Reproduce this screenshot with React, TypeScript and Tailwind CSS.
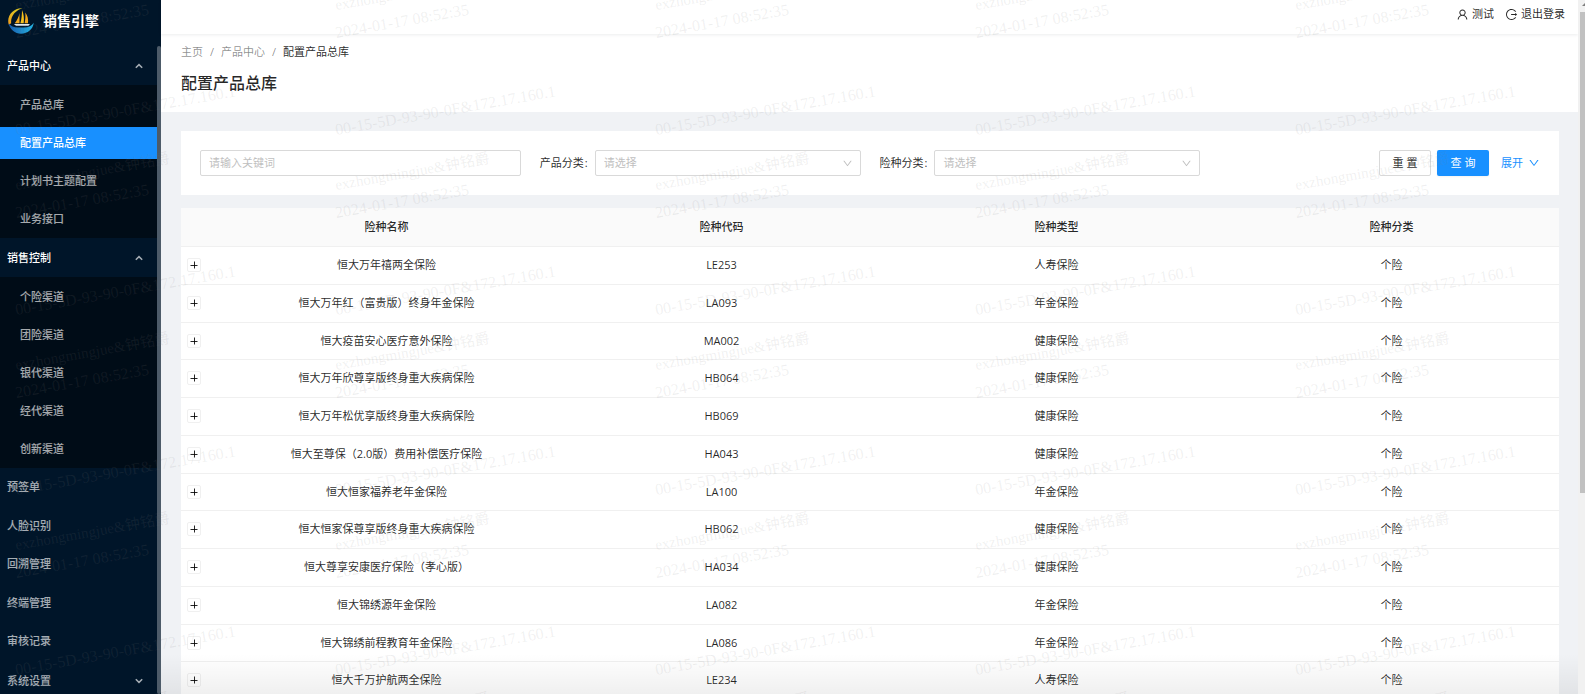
import { useState } from 'react';
import { AiOutlineDown, AiOutlineLogout, AiOutlineUser } from 'react-icons/ai';

interface MenuNode {
  label: string;
  children?: string[];
}

interface Product {
  name: string;
  code: string;
  type: string;
  category: string;
}

const MENU: MenuNode[] = [
  { label: '产品中心', children: ['产品总库', '配置产品总库', '计划书主题配置', '业务接口'] },
  { label: '销售控制', children: ['个险渠道', '团险渠道', '银代渠道', '经代渠道', '创新渠道'] },
  { label: '预签单' },
  { label: '人脸识别' },
  { label: '回溯管理' },
  { label: '终端管理' },
  { label: '审核记录' },
  { label: '系统设置', children: [] },
];

const PRODUCTS: Product[] = [
  { name: '恒大万年禧两全保险', code: 'LE253', type: '人寿保险', category: '个险' },
  { name: '恒大万年红（富贵版）终身年金保险', code: 'LA093', type: '年金保险', category: '个险' },
  { name: '恒大疫苗安心医疗意外保险', code: 'MA002', type: '健康保险', category: '个险' },
  { name: '恒大万年欣尊享版终身重大疾病保险', code: 'HB064', type: '健康保险', category: '个险' },
  { name: '恒大万年松优享版终身重大疾病保险', code: 'HB069', type: '健康保险', category: '个险' },
  { name: '恒大至尊保（2.0版）费用补偿医疗保险', code: 'HA043', type: '健康保险', category: '个险' },
  { name: '恒大恒家福养老年金保险', code: 'LA100', type: '年金保险', category: '个险' },
  { name: '恒大恒家保尊享版终身重大疾病保险', code: 'HB062', type: '健康保险', category: '个险' },
  { name: '恒大尊享安康医疗保险（孝心版）', code: 'HA034', type: '健康保险', category: '个险' },
  { name: '恒大锦绣源年金保险', code: 'LA082', type: '年金保险', category: '个险' },
  { name: '恒大锦绣前程教育年金保险', code: 'LA086', type: '年金保险', category: '个险' },
  { name: '恒大千万护航两全保险', code: 'LE234', type: '人寿保险', category: '个险' },
];

function Logo() {
  return (
    <svg className="h-[26px] w-[26px]" viewBox="0 0 26 26" aria-hidden="true">
      <defs>
        <linearGradient id="logo-gold" x1="0" y1="0" x2="0" y2="1">
          <stop offset="0" stopColor="#d9c622" />
          <stop offset="1" stopColor="#f39a1c" />
        </linearGradient>
        <linearGradient id="logo-sea" x1="0" y1="0" x2="1" y2="0">
          <stop offset="0" stopColor="#1a5cab" />
          <stop offset="1" stopColor="#22b5e6" />
        </linearGradient>
      </defs>
      <path d="M14.500.3C7-.3.200 5.500.200 13c0 1.300.2 2.600.6 3.700l2.400-1.500C2.300 8.500 7.500 2.300 14.500.3Z" fill="url(#logo-gold)" />
      <path d="M.6 15.200C2.500 18 6 19.600 10 19.600h6c4.500 0 8-1.600 9.700-4.800C25 21.200 19.800 25.700 13 25.700 7 25.700 1.800 21.500.6 15.200Z" fill="url(#logo-sea)" />
      <path d="M11.500 5v10.300H6.800C9 12.500 10.800 9 11.500 5Z" fill="#f2a81d" />
      <path d="M14 2c1.800 4 2.300 8.500 1.700 13.300h-3.300c1.200-4.300 1.600-8.800 1.600-13.300Z" fill="#f6c21c" />
      <path d="M17.300 4.500c2.400 3 3.200 7 2.700 10.800h-3.400c.8-3.600 1-7.200.7-10.800Z" fill="#f2a81d" />
      <path d="M5.800 16h16.200l-1.600 1.800H8L5.800 16Z" fill="#dfe7ee" />
    </svg>
  );
}

function Arrow({ up }: { up: boolean }) {
  return (
    <svg className="h-2 w-2" viewBox="0 0 8 8" fill="none" stroke="currentColor" strokeWidth="1.5" aria-hidden="true">
      <path d={up ? 'M.8 5.800 4 2.600l3.200 3.200' : 'M.8 2.200 4 5.400l3.200-3.200'} />
    </svg>
  );
}

function Sidebar() {
  const [active, setActive] = useState('配置产品总库');

  return (
    <aside className="flex w-[161px] flex-shrink-0 flex-col bg-[#001529]">
      <a href="#" className="flex h-[46px] flex-shrink-0 items-start gap-[9px] px-2 pt-2">
        <Logo />
        <span className="text-[14px] leading-[26px] font-bold text-white">销售引擎</span>
      </a>
      <div className="flex min-h-0 flex-1">
        <nav className="flex-1 overflow-hidden text-white/65">
          {MENU.map(node => (
            <div key={node.label} className="nth-[2n+4]:pt-px">
              {node.children ? (
                <button
                  className={`flex h-[39px] w-full items-center justify-between pr-[14px] pl-[7px] text-left font-medium ${node.children.length ? 'text-white' : ''}`}
                >
                  {node.label}
                  <span className="text-white/65"><Arrow up={node.children.length > 0} /></span>
                </button>
              ) : (
                <a href="#" className="flex h-[38px] items-center pl-[7px] font-medium">{node.label}</a>
              )}
              {node.children && node.children.length > 0 && (
                <div className="bg-[#000c17] pt-px">
                  {node.children.map(c => (
                    <div key={c} className="py-[3px]">
                      <a
                        href="#"
                        onClick={() => setActive(c)}
                        className={`flex h-8 items-center pl-5 font-medium ${c === active ? 'bg-[#1890ff] text-white' : ''}`}
                      >
                        {c}
                      </a>
                    </div>
                  ))}
                </div>
              )}
            </div>
          ))}
        </nav>
        <div className="w-1 rounded-full bg-[#4d5b69]" />
      </div>
    </aside>
  );
}

function SelectField({ id, label }: { id: string; label: string }) {
  return (
    <div className="flex items-center gap-[7px]">
      <label htmlFor={id} className="flex-shrink-0">
        {label}<span className="pl-px">:</span>
      </label>
      <div className="relative flex-1">
        <select
          id={id}
          defaultValue=""
          className="block h-[26px] w-full appearance-none rounded-xs border border-[#d9d9d9] bg-white px-2 text-[#bfbfbf] outline-none"
        >
          <option value="">请选择</option>
        </select>
        <AiOutlineDown className="pointer-events-none absolute top-2 right-2 h-[11px] w-[11px] text-[#bfbfbf]" />
      </div>
    </div>
  );
}

function FilterBar() {
  return (
    <form className="grid grid-cols-4 items-center gap-[19px] bg-white p-[19px]" onSubmit={e => e.preventDefault()}>
      <input
        type="text"
        aria-label="关键词"
        placeholder="请输入关键词"
        className="h-[26px] w-full rounded-xs border border-[#d9d9d9] bg-white px-2 pb-px outline-none placeholder:text-[#bfbfbf]"
      />
      <SelectField id="product-category" label="产品分类" />
      <SelectField id="risk-category" label="险种分类" />
      <div className="flex items-center justify-end">
        <button type="reset" className="h-[26px] w-[52px] rounded-xs border border-[#d9d9d9] bg-white">重 置</button>
        <button type="submit" className="ml-[6px] h-[26px] w-[52px] rounded-xs bg-[#1890ff] text-white shadow-xs">查 询</button>
        <a href="#" className="ml-3 flex items-center gap-[5px] text-[#1890ff]">
          展开
          <AiOutlineDown className="h-3 w-3" />
        </a>
      </div>
    </form>
  );
}

function ProductTable() {
  return (
    <table className="mt-[13px] w-full table-fixed border-collapse bg-white text-center">
      <thead>
        <tr className="h-[38px] border-b border-[#f0f0f0] bg-[#fafafa]">
          <th className="w-[38px]" />
          <th className="font-medium">险种名称</th>
          <th className="font-medium">险种代码</th>
          <th className="font-medium">险种类型</th>
          <th className="font-medium">险种分类</th>
        </tr>
      </thead>
      <tbody>
        {PRODUCTS.map(p => (
          <tr key={p.code} className="h-[38px] border-b border-[#f0f0f0] nth-[4n+3]:h-[37px]">
            <td className="pl-[6px]">
              <button
                aria-label="展开行"
                className="flex h-[14px] w-[14px] items-center justify-center rounded-xs border border-[#f0f0f0] bg-white"
              >
                <svg className="h-2 w-2" viewBox="0 0 8 8" stroke="currentColor" aria-hidden="true">
                  <path d="M.5 4.500h7M4.500.5v7" />
                </svg>
              </button>
            </td>
            <td>{p.name}</td>
            <td>{p.code}</td>
            <td>{p.type}</td>
            <td>{p.category}</td>
          </tr>
        ))}
      </tbody>
    </table>
  );
}

// repeated user / time / address stamp over the whole page
function Watermark() {
  return (
    <div
      aria-hidden="true"
      className="pointer-events-none absolute inset-0 overflow-hidden font-['Liberation_Serif','Noto_Sans_CJK_SC',serif] text-[16px] leading-[20px] whitespace-nowrap text-[#808080]/12"
    >
      <div className="-mt-[67px] ml-[17px] grid w-[1600px] grid-cols-[repeat(5,320px)] auto-rows-[180px]">
        {Array.from({ length: 25 }, (_, i) => (
          <div key={i}>
            <p className="mt-[62px] origin-bottom-left -rotate-10 text-[15px]">exzhongmingjue&amp;钟铭爵</p>
            <p className="mt-2 origin-bottom-left -rotate-10">2024-01-17 08:52:35</p>
            <p className="mt-[77px] origin-bottom-left -rotate-10">00-15-5D-93-90-0F&amp;172.17.160.1</p>
          </div>
        ))}
      </div>
    </div>
  );
}

export default function App() {
  return (
    <div className="relative flex h-screen overflow-hidden bg-[#f0f2f5] font-['Open_Sans','Noto_Sans_CJK_SC',sans-serif] text-[11px] leading-[18px] text-black/85">
      <Sidebar />

      <div className="flex min-w-0 flex-1 flex-col">
        <header className="relative flex h-[34px] flex-shrink-0 items-start justify-end gap-[11px] bg-white pt-[5px] pr-[13px] shadow-[0_1px_3px_rgba(0,21,41,0.08)]">
          <a href="#" className="flex items-center gap-[3px]">
            <AiOutlineUser className="h-[13px] w-[13px]" />
            测试
          </a>
          <button className="flex items-center gap-[3px]">
            <AiOutlineLogout className="h-[13px] w-[13px]" />
            退出登录
          </button>
        </header>

        <div className="h-[78px] flex-shrink-0 bg-white px-5 pt-[9px]">
          <nav className="flex text-black/45">
            <a href="#">主页</a>
            <span className="mx-[7px]">/</span>
            <a href="#">产品中心</a>
            <span className="mx-[7px]">/</span>
            <span className="text-black/85">配置产品总库</span>
          </nav>
          <h1 className="mt-[9px] text-[16px] leading-[26px] font-medium">配置产品总库</h1>
        </div>

        <main className="min-h-0 flex-1 overflow-hidden py-[19px] pr-[19px] pl-5">
          <FilterBar />
          <ProductTable />
        </main>
      </div>

      <Watermark />
      <div className="pointer-events-none absolute right-[7px] bottom-0 left-[161px] h-10 bg-linear-to-b from-transparent to-black/6" />

      <div className="relative flex w-[7px] flex-shrink-0 flex-col items-end bg-[#f1f1f1]">
        <svg className="h-3 w-[5px]" viewBox="0 0 5 12" fill="#7f7f7f" aria-hidden="true">
          <path d="M2 6 5 3v3Z" />
        </svg>
        <div className="h-[481px] w-[5px] bg-[#c1c1c1]" />
      </div>
    </div>
  );
}
